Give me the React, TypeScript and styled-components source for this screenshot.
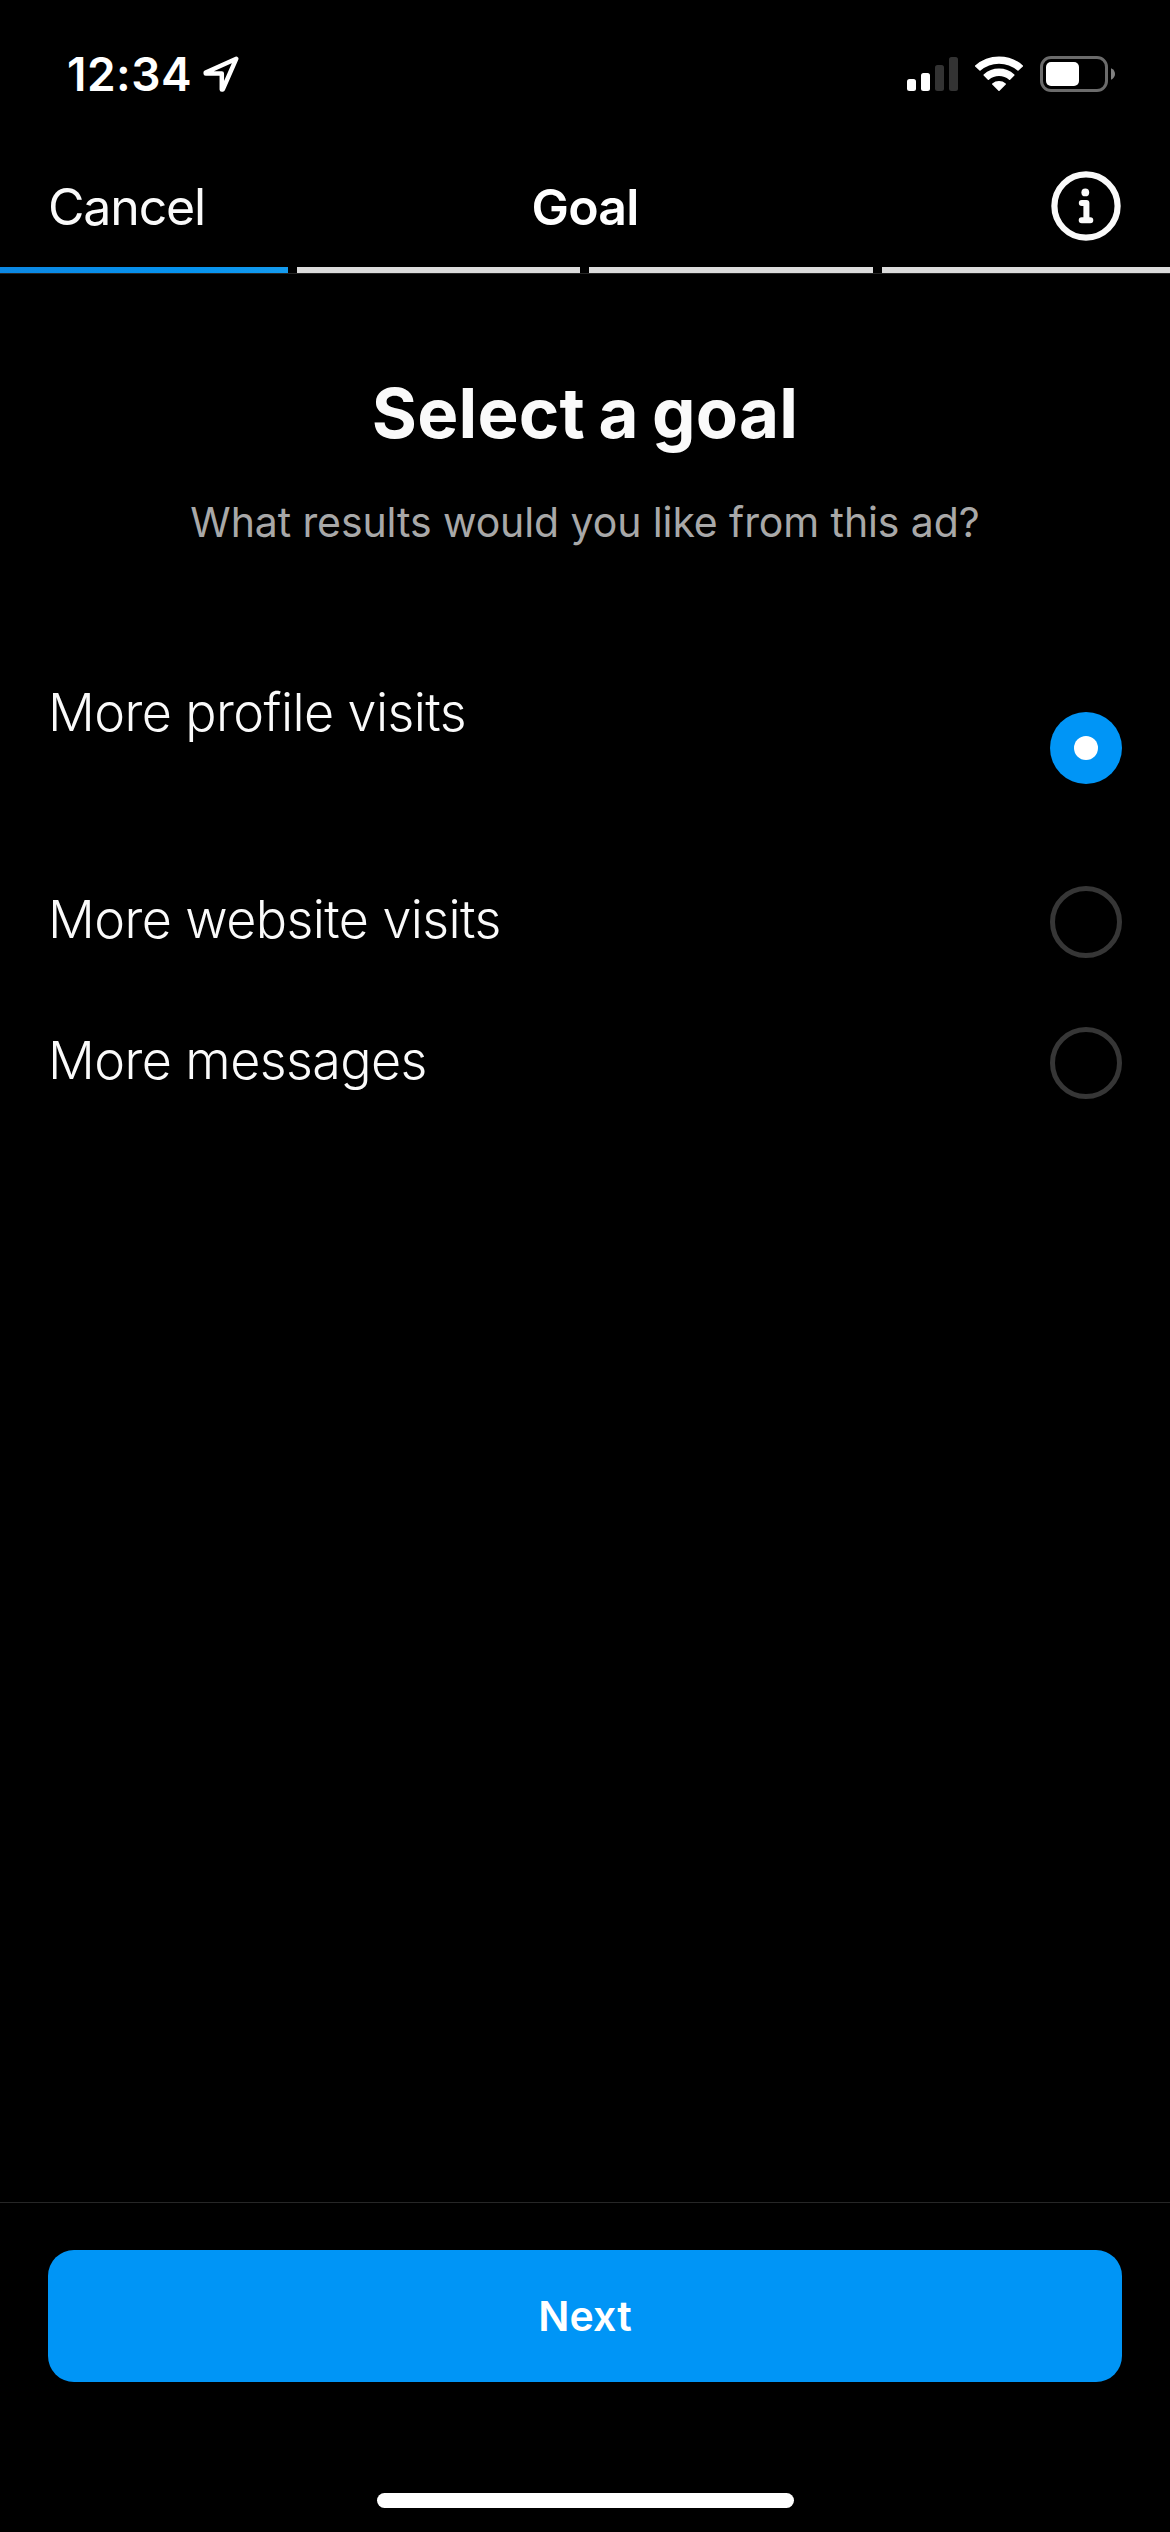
import React, { useState } from "react";
import styled, { createGlobalStyle } from "styled-components";

const GlobalStyle = createGlobalStyle`
  *, *::before, *::after { box-sizing: border-box; }
  body {
    margin: 0;
    background: #000;
    color: #fafafa;
    font-family: Inter, "Liberation Sans", sans-serif;
  }
  button {
    margin: 0;
    padding: 0;
    border: 0;
    background: none;
    color: inherit;
    font: inherit;
  }
`;

const Screen = styled.div`
  display: flex;
  flex-direction: column;
  width: 1170px;
  height: 2532px;
  background: #000;
  overflow: hidden;
`;

const StatusBar = styled.header`
  display: flex;
  align-items: center;
  justify-content: space-between;
  height: 145px;
  padding: 4px 55px 0 67px;
`;

const StatusGroup = styled.div<{ $gap: number }>`
  display: flex;
  align-items: center;
  gap: ${(p) => p.$gap}px;
  height: 40px;
  margin-top: -1px;

  svg { display: block; }
`;

const Clock = styled.span`
  color: #fff;
  font-size: 46px;
  font-weight: 600;
  line-height: 56px;
  letter-spacing: 0.5px;
`;

const NavBar = styled.nav`
  display: grid;
  grid-template-columns: 1fr auto 1fr;
  align-items: center;
  height: 122px;
  padding: 0 48px;
`;

const CancelButton = styled.button`
  justify-self: start;
  padding-top: 2px;
  font-size: 50px;
  line-height: 60px;
  letter-spacing: -1.15px;
`;

const NavTitle = styled.h1`
  margin: 0;
  padding-top: 2px;
  color: #fff;
  font-size: 50px;
  font-weight: 600;
  line-height: 60px;
  letter-spacing: -0.8px;
`;

const InfoButton = styled.button`
  justify-self: end;
  svg { display: block; }
`;

const Progress = styled.div`
  display: grid;
  grid-template-columns: 288px 283px 284px 288px;
  gap: 9px;
  height: 7px;
  border-bottom: 1px solid #262626;
`;

const ProgressStep = styled.div<{ $active: boolean }>`
  background: ${(p) => (p.$active ? "linear-gradient(90deg, #0c88e3, #0593ef 65%, #159bee)" : "#dbdbdb")};
`;

const Content = styled.main`
  display: flex;
  flex: 1;
  flex-direction: column;
`;

const Intro = styled.section`
  display: flex;
  flex-direction: column;
  align-items: center;
  gap: 43px;
  padding-top: 98px;
`;

const Heading = styled.h2`
  margin: 0;
  font-size: 69px;
  font-weight: 700;
  line-height: 82px;
  letter-spacing: 0.22px;
  word-spacing: -3.2px;
`;

const Subheading = styled.p`
  margin: 0;
  color: #a8a8a8;
  font-size: 41px;
  line-height: 50px;
  letter-spacing: -0.1px;
`;

const GoalList = styled.div`
  display: flex;
  flex-direction: column;
  gap: 1px;
  padding-top: 98px;
`;

const GoalRow = styled.button<{ $tall: boolean }>`
  display: flex;
  align-items: center;
  justify-content: space-between;
  height: ${(p) => (p.$tall ? 206 : 140)}px;
  padding: 0 48px;
  text-align: left;
`;

const GoalText = styled.span<{ $tall: boolean }>`
  padding-bottom: ${(p) => (p.$tall ? 71 : 5)}px;
  font-size: 52px;
  font-weight: 300;
  line-height: 61px;
  letter-spacing: -0.58px;
`;

const Radio = styled.span<{ $checked: boolean }>`
  display: flex;
  align-items: center;
  justify-content: center;
  width: 72px;
  height: 72px;
  border: ${(p) => (p.$checked ? "0" : "5px solid #363636")};
  border-radius: 50%;
  background: ${(p) => (p.$checked ? "#0095f6" : "transparent")};
`;

const RadioDot = styled.span`
  width: 24px;
  height: 24px;
  border-radius: 50%;
  background: #fff;
`;

const Footer = styled.footer`
  display: flex;
  flex-direction: column;
  align-items: center;
  height: 330px;
  padding: 47px 48px 24px;
  border-top: 1px solid #262626;
`;

const NextButton = styled.button`
  width: 100%;
  height: 132px;
  border-radius: 26px;
  background: #0095f6;
  color: #fff;
  font-size: 41px;
  font-weight: 600;
  line-height: 50px;
  letter-spacing: 0.17px;
`;

const HomeIndicator = styled.div`
  width: 417px;
  height: 15px;
  margin-top: auto;
  border-radius: 8px;
  background: #fff;
`;

const LocationIcon = () => (
  <svg width="42" height="42" viewBox="200 54 42 42">
    <path
      d="M236.3 59.7 205.7 73.5V74.4H221.8V90.4H222.8Z"
      fill="none"
      stroke="#fff"
      strokeWidth="4.5"
      strokeLinejoin="round"
    />
  </svg>
);

const bars = [12, 18, 26, 34];

const SignalIcon = () => (
  <svg width="51" height="40" viewBox="0 0 51 40">
    {bars.map((h, i) => (
      <rect key={h} x={i * 14} y={37 - h} width="9" height={h} rx="2.5" fill={i < 2 ? "#fff" : "#333"} />
    ))}
  </svg>
);

const WifiIcon = () => (
  <svg width="48" height="40" viewBox="975 54 48 40">
    <g fill="#fff" stroke="#fff" strokeWidth="1.6" strokeLinejoin="round">
      <path d="M975.7 66A35.2 35.2 0 0 1 1022.3 66L1018 70A29 29 0 0 0 980 70Z" />
      <path d="M984.2 75A22.4 22.4 0 0 1 1013.8 75L1009.6 79.2A16.4 16.4 0 0 0 988.4 79.2Z" />
      <path d="M992.8 84A9.8 9.8 0 0 1 1005.2 84L999 90.2Z" />
    </g>
  </svg>
);

const BatteryIcon = () => (
  <svg width="75" height="40" viewBox="1040 54 75 40">
    <rect x="1041.5" y="57.5" width="65" height="33" rx="9.5" fill="none" stroke="#6b6b6b" strokeWidth="3" />
    <rect x="1046" y="62" width="33" height="24" rx="5" fill="#fff" />
    <path d="M1111 68.3C1113.6 69.4 1115 71.5 1115 74S1113.6 78.6 1111 79.7Z" fill="#808080" />
  </svg>
);

const InfoIcon = () => (
  <svg width="72" height="72" viewBox="1050 170 72 72" fill="none" stroke="#fafafa">
    <circle cx="1086" cy="206" r="31.6" strokeWidth="6.2" />
    <circle cx="1085.3" cy="192.4" r="3.9" fill="#fafafa" stroke="none" />
    <path
      d="M1081.8 202.9H1086.4V220.3M1081.7 220.3H1090.3"
      strokeWidth="6"
      strokeLinecap="round"
      strokeLinejoin="round"
    />
  </svg>
);

const goals = ["More profile visits", "More website visits", "More messages"];

export default function App() {
  const [selected, setSelected] = useState(0);

  return (
    <Screen>
      <GlobalStyle />
      <StatusBar>
        <StatusGroup $gap={8}>
          <Clock>12:34</Clock>
          <LocationIcon />
        </StatusGroup>
        <StatusGroup $gap={17}>
          <SignalIcon />
          <WifiIcon />
          <BatteryIcon />
        </StatusGroup>
      </StatusBar>
      <NavBar>
        <CancelButton>Cancel</CancelButton>
        <NavTitle>Goal</NavTitle>
        <InfoButton aria-label="Info">
          <InfoIcon />
        </InfoButton>
      </NavBar>
      <Progress>
        {[0, 1, 2, 3].map((step) => (
          <ProgressStep key={step} $active={step === 0} />
        ))}
      </Progress>
      <Content>
        <Intro>
          <Heading>Select a goal</Heading>
          <Subheading>What results would you like from this ad?</Subheading>
        </Intro>
        <GoalList role="radiogroup">
          {goals.map((goal, i) => (
            <GoalRow key={goal} $tall={i === 0} role="radio" aria-checked={i === selected} onClick={() => setSelected(i)}>
              <GoalText $tall={i === 0}>{goal}</GoalText>
              <Radio $checked={i === selected}>{i === selected && <RadioDot />}</Radio>
            </GoalRow>
          ))}
        </GoalList>
      </Content>
      <Footer>
        <NextButton>Next</NextButton>
        <HomeIndicator />
      </Footer>
    </Screen>
  );
}
